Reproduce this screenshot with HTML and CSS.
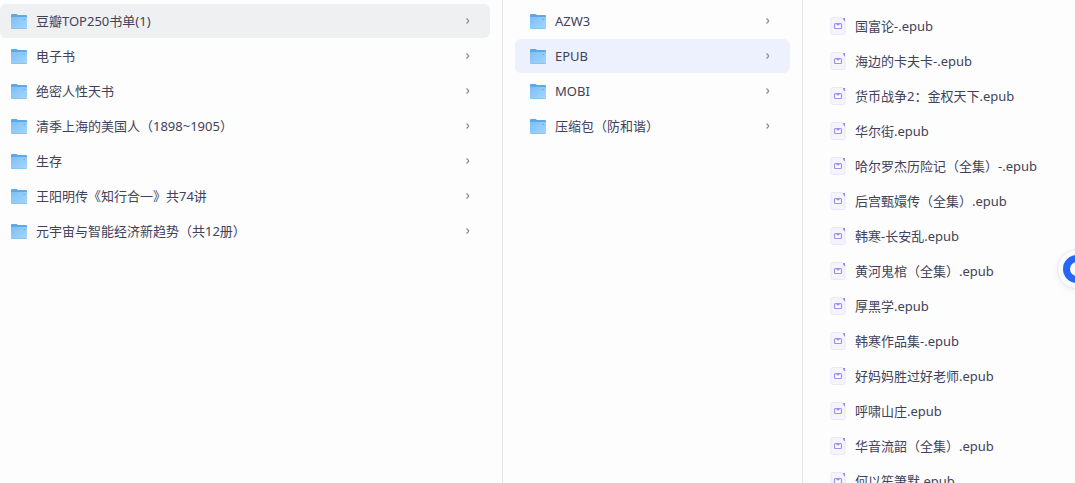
FILE: index.html
```
<!DOCTYPE html>
<html lang="zh-CN">
  <head>
    <meta charset="utf-8">
    <title>豆瓣TOP250书单(1)</title>
    <link rel="stylesheet" href="styles.css">
  </head>
  <body>
  <svg class="defs" aria-hidden="true">
    <defs>
      <linearGradient id="front" x1="0" y1="0" x2="1" y2="1">
        <stop offset="0" stop-color="#7cbff5"/>
        <stop offset="1" stop-color="#a6d6fd"/>
      </linearGradient>
    </defs>
    <symbol id="folder" viewBox="0 0 18 16">
      <path d="M1 2Q1 1 2 1H6.500L8 2H16Q17 2 17 3V8H1Z" fill="#5ba9e8"/>
      <path d="M1 4H16.500Q17 4 17 4.500V15Q17 16 16 16H2Q1 16 1 15Z" fill="url(#front)"/>
      <path d="M1.500 15.500H16.500" stroke="#8ac4f0" stroke-width="1"/>
      <path d="M13.500 6.500H15" stroke="#62aeea" stroke-width="1"/>
    </symbol>
    <symbol id="epub" viewBox="0 0 16 18">
      <path d="M2.500 .5H12L15 3V16Q15 17.500 13.500 17.500H2.500Q1 17.500 1 16V2Q1 .5 2.500 .5Z" fill="#f5f4fd" stroke="#e9e7f8"/>
      <path d="M13 1H15V4.500Q13 4 13 1Z" fill="#8f88ec"/>
      <path d="M5.500 6.500H10.500Q11.500 6.500 11.500 7.500V10.500Q11.500 11.500 10.500 11.500H5.500Q4.500 11.500 4.500 10.500V7.500Q4.500 6.500 5.500 6.500ZM6.500 7L8 8L9.500 7" fill="#fbfaff" stroke="#9a93f0" stroke-width="1.200"/>
    </symbol>
    <symbol id="arrow" viewBox="0 0 6 8">
      <path d="M1.500 1.500L3.500 3.500V4.500L1.500 6.500" fill="none" stroke="#8d8e9e" stroke-width="1.300"/>
    </symbol>
  </svg>
  <main class="columns">
    <ul class="column first">
      <li><a href="#" class="item open"><svg class="folder"><use href="#folder"/></svg><span class="name">豆瓣TOP250书单(1)</span><svg class="arrow"><use href="#arrow"/></svg></a></li>
      <li><a href="#" class="item"><svg class="folder"><use href="#folder"/></svg><span class="name">电子书</span><svg class="arrow"><use href="#arrow"/></svg></a></li>
      <li><a href="#" class="item"><svg class="folder"><use href="#folder"/></svg><span class="name">绝密人性天书</span><svg class="arrow"><use href="#arrow"/></svg></a></li>
      <li><a href="#" class="item"><svg class="folder"><use href="#folder"/></svg><span class="name">清季上海的美国人（1898~1905）</span><svg class="arrow"><use href="#arrow"/></svg></a></li>
      <li><a href="#" class="item"><svg class="folder"><use href="#folder"/></svg><span class="name">生存</span><svg class="arrow"><use href="#arrow"/></svg></a></li>
      <li><a href="#" class="item"><svg class="folder"><use href="#folder"/></svg><span class="name">王阳明传《知行合一》共74讲</span><svg class="arrow"><use href="#arrow"/></svg></a></li>
      <li><a href="#" class="item"><svg class="folder"><use href="#folder"/></svg><span class="name">元宇宙与智能经济新趋势（共12册）</span><svg class="arrow"><use href="#arrow"/></svg></a></li>
    </ul>
    <ul class="column">
      <li><a href="#" class="item"><svg class="folder"><use href="#folder"/></svg><span class="name">AZW3</span><svg class="arrow"><use href="#arrow"/></svg></a></li>
      <li><a href="#" class="item active"><svg class="folder"><use href="#folder"/></svg><span class="name">EPUB</span><svg class="arrow"><use href="#arrow"/></svg></a></li>
      <li><a href="#" class="item"><svg class="folder"><use href="#folder"/></svg><span class="name">MOBI</span><svg class="arrow"><use href="#arrow"/></svg></a></li>
      <li><a href="#" class="item"><svg class="folder"><use href="#folder"/></svg><span class="name">压缩包（防和谐）</span><svg class="arrow"><use href="#arrow"/></svg></a></li>
    </ul>
    <ul class="column files">
      <li><a href="#" class="item"><svg class="epub"><use href="#epub"/></svg><span class="name">国富论-.epub</span></a></li>
      <li><a href="#" class="item"><svg class="epub"><use href="#epub"/></svg><span class="name">海边的卡夫卡-.epub</span></a></li>
      <li><a href="#" class="item"><svg class="epub"><use href="#epub"/></svg><span class="name">货币战争2：金权天下.epub</span></a></li>
      <li><a href="#" class="item"><svg class="epub"><use href="#epub"/></svg><span class="name">华尔街.epub</span></a></li>
      <li><a href="#" class="item"><svg class="epub"><use href="#epub"/></svg><span class="name">哈尔罗杰历险记（全集）-.epub</span></a></li>
      <li><a href="#" class="item"><svg class="epub"><use href="#epub"/></svg><span class="name">后宫甄嬛传（全集）.epub</span></a></li>
      <li><a href="#" class="item"><svg class="epub"><use href="#epub"/></svg><span class="name">韩寒-长安乱.epub</span></a></li>
      <li><a href="#" class="item"><svg class="epub"><use href="#epub"/></svg><span class="name">黄河鬼棺（全集）.epub</span></a></li>
      <li><a href="#" class="item"><svg class="epub"><use href="#epub"/></svg><span class="name">厚黑学.epub</span></a></li>
      <li><a href="#" class="item"><svg class="epub"><use href="#epub"/></svg><span class="name">韩寒作品集-.epub</span></a></li>
      <li><a href="#" class="item"><svg class="epub"><use href="#epub"/></svg><span class="name">好妈妈胜过好老师.epub</span></a></li>
      <li><a href="#" class="item"><svg class="epub"><use href="#epub"/></svg><span class="name">呼啸山庄.epub</span></a></li>
      <li><a href="#" class="item"><svg class="epub"><use href="#epub"/></svg><span class="name">华音流韶（全集）.epub</span></a></li>
      <li><a href="#" class="item"><svg class="epub"><use href="#epub"/></svg><span class="name">何以笙箫默.epub</span></a></li>
    </ul>
  </main>
  <button type="button" class="helper" aria-label="助手"><svg viewBox="0 0 28 28" width="28" height="28"><circle cx="14" cy="14" r="10.500" fill="none" stroke="#2468f8" stroke-width="7"/></svg></button>
  </body>
</html>
```

FILE: styles.css
```
body {
  margin: 0;
  background: #fdfdfd;
  color: #41425a;
  font: 13px/20px "Noto Sans", "Noto Sans CJK SC", sans-serif;
  }
/* must stay rendered, or the folder gradient is lost */
.defs {
  position: absolute;
  width: 0;
  height: 0;
  }
.columns {
  display: grid;
  grid-template-columns: minmax(0, 1fr) 300px 272px;
  height: 100vh;
  overflow: hidden;
  }
.column {
  display: flex;
  flex-direction: column;
  gap: 1px;
  margin: 0;
  padding: 4px 12px;
  border-right: 1px solid #e4e4e6;
  list-style: none;
  }
.first {
  padding-left: 0;
  }
.files {
  padding-top: 9px;
  padding-right: 0;
  border-right: 0;
  }
.item {
  display: flex;
  align-items: center;
  height: 34px;
  padding: 0 19px 0 14px;
  border-radius: 6px;
  color: inherit;
  text-decoration: none;
  }
.first .item {
  padding-left: 10px;
  }
.files .item {
  padding: 0 0 0 15px;
  }
.open {
  background: #eff0f1;
  }
.active {
  background: #edf1fe;
  }
.name {
  flex: 1;
  white-space: nowrap;
  }
.folder {
  width: 18px;
  height: 16px;
  margin-right: 8px;
  }
.epub {
  width: 16px;
  height: 18px;
  margin-right: 9px;
  }
.arrow {
  width: 6px;
  height: 8px;
  }
/* floats over the right edge of the window */
.helper {
  position: fixed;
  top: 249px;
  right: -22px;
  display: flex;
  align-items: center;
  justify-content: center;
  width: 40px;
  height: 40px;
  padding: 0;
  border: 1px solid #e9eaec;
  border-radius: 50%;
  background: #fafbfc;
  box-shadow: 0 2px 6px rgba(0,0,0,.06);
  }
```
